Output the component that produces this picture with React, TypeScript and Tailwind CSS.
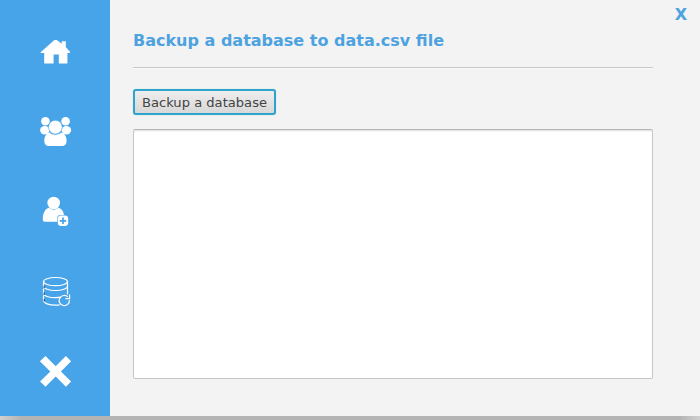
import React from "react";

function NavItem({ label, children }: { label: string; children: React.ReactNode }) {
  return (
    <button aria-label={label} className="flex h-20 w-full items-center justify-center">
      <svg className="h-10 w-[50px]" viewBox="0 1 50 40" fill="#fff">
        {children}
      </svg>
    </button>
  );
}

export default function App() {
  return (
    <div className="flex h-[420px] w-[700px] flex-col overflow-hidden bg-[#f3f3f3] font-['DejaVu_Sans',sans-serif]">
      <div className="flex h-[416px]">
        <nav className="flex w-[110px] flex-col bg-[#48a4e9] pt-[11px]">
          <NavItem label="Home">
            <path d="M24.4 10h2.4l5 3.8v-2.5h4v5.8l4.4 5-.6.9H37.4V33.4H28.8V24.6H23.6V33.4H14.2V23H11l-.4-.8z" />
          </NavItem>
          <NavItem label="Users">
            <circle cx="15.4" cy="11.2" r="4.3" />
            <circle cx="35.6" cy="11.2" r="4.3" />
            <ellipse cx="14.8" cy="20.2" rx="4.7" ry="4.2" />
            <ellipse cx="36.4" cy="20.2" rx="4.7" ry="4.2" />
            <circle cx="25.4" cy="17.2" r="6.9" stroke="#48a4e9" strokeWidth=".6" />
            <path d="M19.4 22.6c3.6 3 8.4 3 12 0 3.4.6 5.2 4.4 5.2 8.6 0 3.1-1.8 4.9-4.7 4.9H19c-2.9 0-4.7-1.8-4.7-4.9 0-4.2 1.8-8 5.1-8.6z" />
          </NavItem>
          <NavItem label="Add user">
            <circle cx="23.7" cy="13" r="6.3" />
            <path d="M19.1 17.8c2.8 2.6 6.4 2.6 9.2 0 3.6 1 5.4 3.7 5.6 7.2h-3.6c-2 0-3 1.2-3 3v3.7H15c-1.6 0-2.2-.8-2.2-2.5 0-5.7 2.2-10.5 6.3-11.4z" />
            <rect x="27.8" y="25.4" width="10.4" height="10.6" rx="3.4" />
            <path d="M33 27.6v6.4M29.8 30.8h6.4" stroke="#48a4e9" strokeWidth="1.7" />
          </NavItem>
          <NavItem label="Backup database">
            <g fill="none" stroke="#fff" strokeWidth="1.2">
              <ellipse cx="25.5" cy="11.6" rx="12" ry="4.1" />
              <path d="M13.5 11.6v4.6c0 2.4 5.4 4.3 12 4.3s12-1.9 12-4.3v-4.6M13.5 18.6v4.8c0 2.4 5.4 4.3 12 4.3 2 0 3.9-.2 5.5-.5M37.5 16.2v8.3M13.5 25.6v5c0 2.5 5.4 4.6 12 4.6 1.5 0 2.9-.1 4.2-.3" />
              <path d="M37.8 26.8a5.1 5.1 0 1 0 1.6 3.3M39.6 24.4v4.2h-4.2" />
            </g>
            <path d="M14.2 15.6v2.6M14.2 22.4v2.6M14.2 29v2.4" stroke="#17334a" strokeWidth="1" />
          </NavItem>
          <NavItem label="Exit">
            <path d="M15.5 6.1l10.2 10.1L35.9 6.1l5.2 5.2-10.2 10.2 10.2 9.9-5.2 5.3-10.2-10.2-10.2 10.2-5.4-5.3 10.2-9.9L9.9 11.3z" />
          </NavItem>
        </nav>
        <main className="flex flex-1 flex-col pl-[23px]">
          <div className="flex h-7 justify-end pr-[13px] text-base font-bold text-[#4da2e0]">
            <button aria-label="Close" className="h-[30px] leading-[30px]">X</button>
          </div>
          <h1 className="h-[39px] w-[520px] text-base leading-[25px] font-bold whitespace-nowrap text-[#4da2e0]">
            Backup a database to data.csv file
          </h1>
          <div className="h-0.5 w-[520px] border-t border-b border-t-[#c8c8c8] border-b-[#fafafa]" />
          <button className="mt-5 h-[26px] w-[143px] rounded-[3px] border-2 border-[#2fa3c9] bg-linear-to-b from-[#eeeeee] to-[#d8d8d8] pt-px text-[13.1px] leading-[21px] whitespace-nowrap text-[#444444] shadow-[0_0_1px_#7fc9de]">
            Backup a database
          </button>
          <textarea
            readOnly
            aria-label="Backup log"
            className="mt-[14px] h-[250px] w-[520px] resize-none rounded-[2px] border border-[#c6c6c6] border-t-[#b5b5b5] bg-white shadow-[inset_0_2px_2px_-1px_#dedede]"
          />
        </main>
      </div>
      <div className="h-1 bg-linear-to-r from-[#d0d0d0] via-[#b4b4b4] via-3% to-[#b4b4b4]">
        <div className="ml-auto h-full w-5 bg-linear-to-r from-[#b4b4b4] to-[#d0d0d0]" />
      </div>
    </div>
  );
}
